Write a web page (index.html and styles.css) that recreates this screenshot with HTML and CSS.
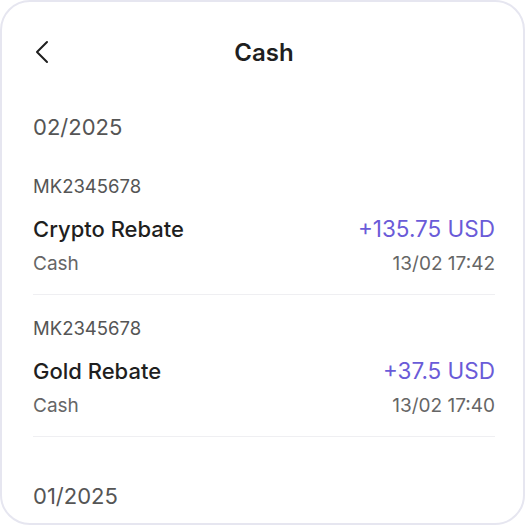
FILE: index.html
```html
<!DOCTYPE html>
<html>
<head>
<meta charset="utf-8">
<link rel="stylesheet" href="styles.css">
</head>
<body>
<div class="frame">
  <header class="header">
    <svg class="back" width="14" height="24" viewBox="0 0 14 24"><path d="M12 2 L2 12 L12 22" fill="none" stroke="#1f1f1f" stroke-width="2" stroke-linecap="round" stroke-linejoin="round"/></svg>
    <h1 class="title">Cash</h1>
  </header>
  <section class="group">
    <div class="month">02/2025</div>
    <div class="item">
      <div class="ref">MK2345678</div>
      <div class="row main">
        <span class="name">Crypto Rebate</span>
        <span class="amount">+135.75 USD</span>
      </div>
      <div class="row sub">
        <span>Cash</span>
        <span>13/02 17:42</span>
      </div>
    </div>
    <div class="item">
      <div class="ref">MK2345678</div>
      <div class="row main">
        <span class="name">Gold Rebate</span>
        <span class="amount">+37.5 USD</span>
      </div>
      <div class="row sub">
        <span>Cash</span>
        <span>13/02 17:40</span>
      </div>
    </div>
  </section>
  <section class="group">
    <div class="month next">01/2025</div>
  </section>
</div>
</body>
</html>
```
FILE: styles.css
```css
* { box-sizing: border-box; }
html, body { margin: 0; padding: 0; background: #ffffff; }
body { font-family: Inter, "Noto Sans", sans-serif; }
.frame {
  width: 525px;
  height: 525px;
  border: 2px solid #e6e6f0;
  border-radius: 30px;
  overflow: hidden;
  padding: 0 28px 0 31px;
  background: #fff;
}
.header {
  position: relative;
  height: 98px;
  padding-top: 4px;
  display: flex;
  align-items: center;
  justify-content: center;
}
.back {
  position: absolute;
  left: 2px;
  top: 38px;
}
.title {
  margin: 0;
  font-size: 24px;
  font-weight: 600;
  color: #1f1f1f;
  line-height: 28px;
}
.month {
  font-size: 22px;
  line-height: 24px;
  color: #555;
  margin-top: 15px;
  margin-bottom: 14px;
}
.month.next { margin-top: 47px; }
.item {
  padding-top: 23px;
  padding-bottom: 19px;
  border-bottom: 1px solid #efeff2;
}
.ref {
  font-size: 18.5px;
  line-height: 20px;
  color: #555;
}
.row {
  display: flex;
  justify-content: space-between;
  align-items: center;
}
.main {
  margin-top: 21px;
  font-size: 22px;
  line-height: 24px;
  font-weight: 450;
  color: #1f1f1f;
}
.amount { color: #6a5bd8; font-weight: 400; font-size: 22.5px; }
.sub {
  margin-top: 12px;
  font-size: 19px;
  line-height: 22px;
  color: #666;
}
```
